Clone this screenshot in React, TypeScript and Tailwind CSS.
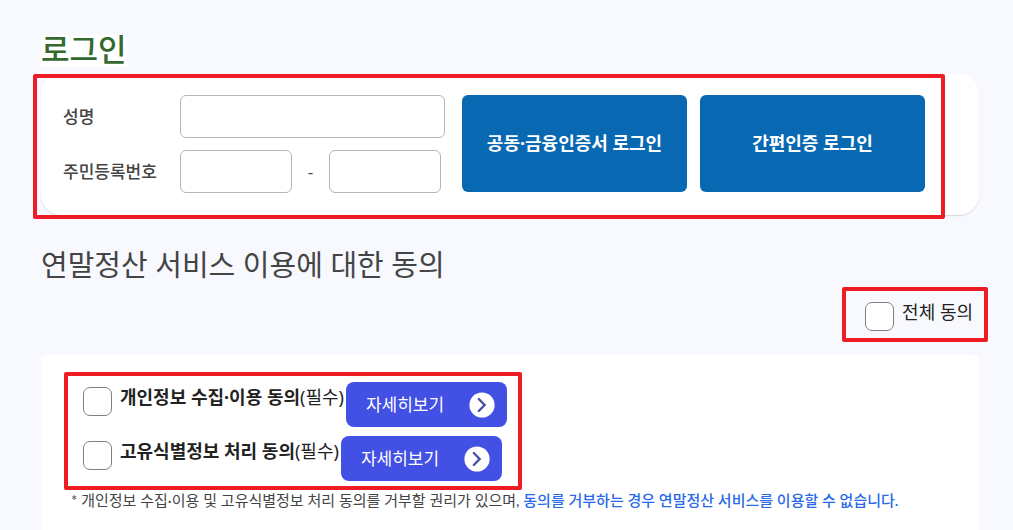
import type { InputHTMLAttributes } from "react";

const field =
  "h-[43px] rounded-md border border-[#b5b5b5] bg-white px-3 text-[17px] text-[#444] outline-none";

function Highlight({ className }: { className: string }) {
  return (
    <div
      aria-hidden="true"
      className={`pointer-events-none absolute rounded-xs border-4 border-[#ee1c25] ${className}`}
    />
  );
}

function CheckBox(props: InputHTMLAttributes<HTMLInputElement>) {
  return (
    <input
      type="checkbox"
      className="block size-[29px] shrink-0 appearance-none rounded-[7px] border border-[#808080] bg-white checked:bg-[#4250e4]"
      {...props}
    />
  );
}

function LoginButton({ label }: { label: string }) {
  return (
    <button
      type="button"
      className="w-[225px] rounded-md bg-[#0868b2] text-[18px] font-bold text-white"
    >
      {label}
    </button>
  );
}

function ConsentRow({ id, title }: { id: string; title: string }) {
  return (
    <div className="flex h-[45px] items-start">
      <div className="pt-[5px]">
        <CheckBox id={id} />
      </div>
      <label htmlFor={id} className="ml-2 pt-[3px] text-[18px] leading-6 text-[#222]">
        <strong className="font-bold">{title}</strong>(필수)
      </label>
      <button
        type="button"
        className="ml-0.5 flex h-[45px] w-[161px] items-center justify-between rounded-lg bg-[#4250e4] pr-3 pl-5 text-[17px] text-white"
      >
        자세히보기
        <svg viewBox="0 0 26 26" className="size-[26px]" fill="none" aria-hidden="true">
          <circle cx="13" cy="13" r="12.6" fill="#fff" />
          <path
            d="M9.8 7 L15.6 13 L9.8 19"
            stroke="#4a50a8"
            strokeWidth="2.4"
            strokeLinecap="round"
            strokeLinejoin="miter"
          />
        </svg>
      </button>
    </div>
  );
}

export default function App() {
  return (
    <main className="flex min-h-screen flex-col bg-[#f8f9ff] pt-[35px] pr-[34px] pl-[41px] font-['Noto_Sans','Noto_Sans_CJK_KR',sans-serif] text-[#444]">
      <h1 className="self-start bg-white pb-1 text-[31px] leading-7 font-medium text-[#34692f]">
        로그인
      </h1>

      <form className="relative mt-[7px] flex items-start gap-[17px] rounded-[20px] bg-white pt-[21px] pb-[22px] pl-[22px] shadow-[0_1px_1px_#d8d8dc]">
        <div className="grid grid-cols-[117px_265px] items-center gap-y-3 text-[17px]">
          <label htmlFor="name" className="font-medium">
            성명
          </label>
          <input id="name" type="text" className={field} />
          <label htmlFor="rrn-front" className="font-medium">
            주민등록번호
          </label>
          <div className="flex items-center">
            <input id="rrn-front" type="text" className={`${field} w-28`} />
            <span className="w-[37px] text-center">-</span>
            <input
              type="password"
              aria-label="주민등록번호 뒷자리"
              className={`${field} w-28`}
            />
          </div>
        </div>
        <div className="flex h-[97px] gap-[13px]">
          <LoginButton label="공동·금융인증서 로그인" />
          <LoginButton label="간편인증 로그인" />
        </div>
        <Highlight className="top-0 right-[34px] -bottom-1 -left-2" />
      </form>

      <h2 className="mt-8 text-[29px] leading-9">연말정산 서비스 이용에 대한 동의</h2>

      <div className="relative mt-[19px] mr-1.5 flex items-start gap-2 self-end">
        <CheckBox id="agree-all" />
        <label htmlFor="agree-all" className="text-[18px] leading-5 text-[#222]">
          전체 동의
        </label>
        <Highlight className="-top-[15px] -right-[15px] -bottom-[11px] -left-[23px]" />
      </div>

      <section className="mt-6 grow rounded-t-md bg-white pt-[17px] pr-6 pl-[23px]">
        <div className="relative flex w-[458px] flex-col gap-[9px] pt-2.5 pb-[9px] pl-[19px]">
          <ConsentRow id="agree-privacy" title="개인정보 수집·이용 동의" />
          <ConsentRow id="agree-unique" title="고유식별정보 처리 동의" />
          <Highlight className="inset-0" />
        </div>
        <p className="pl-[7px] font-[Lato,'Noto_Sans_CJK_KR',sans-serif] text-[15px] leading-5">
          * 개인정보 수집·이용 및 고유식별정보 처리 동의를 거부할 권리가 있으며,{" "}
          <strong className="font-medium text-[#2a6ae9]">
            동의를 거부하는 경우 연말정산 서비스를 이용할 수 없습니다.
          </strong>
        </p>
      </section>
    </main>
  );
}
